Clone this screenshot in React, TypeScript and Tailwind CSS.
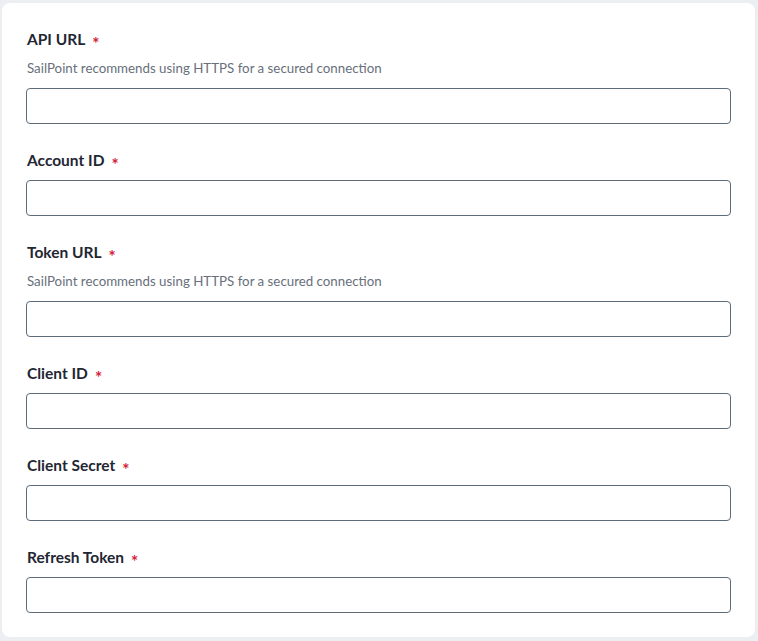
const fields = [
  { label: "API URL", help: "SailPoint recommends using HTTPS for a secured connection" },
  { label: "Account ID" },
  { label: "Token URL", help: "SailPoint recommends using HTTPS for a secured connection" },
  { label: "Client ID" },
  { label: "Client Secret" },
  { label: "Refresh Token" },
];

export default function App() {
  return (
    <div className="min-h-[641px] w-[758px] bg-[#eceef1] pl-[2px] pr-[3px] pt-[3px] pb-[4px] font-['Lato',sans-serif]">
      <div className="flex flex-col gap-[26px] rounded-lg bg-white px-6 pt-[26px] pb-6">
        {fields.map((f) => (
          <div key={f.label} className="flex flex-col gap-[10px]">
            <label className="flex h-5 translate-y-px items-center gap-[7px] pl-px text-[15.5px] font-bold text-[#1f2733]">
              {f.label}
              <span className="translate-y-[3px] text-[17px] leading-none font-bold text-[#d31c3c]">*</span>
            </label>
            {f.help && (
              <p className="h-[19px] pl-px text-[13.3px] leading-[19px] text-[#68707b]">{f.help}</p>
            )}
            <input
              type="text"
              className="h-9 w-full rounded border border-[#5d6b7b] bg-white px-2 text-sm outline-none"
            />
          </div>
        ))}
      </div>
    </div>
  );
}
